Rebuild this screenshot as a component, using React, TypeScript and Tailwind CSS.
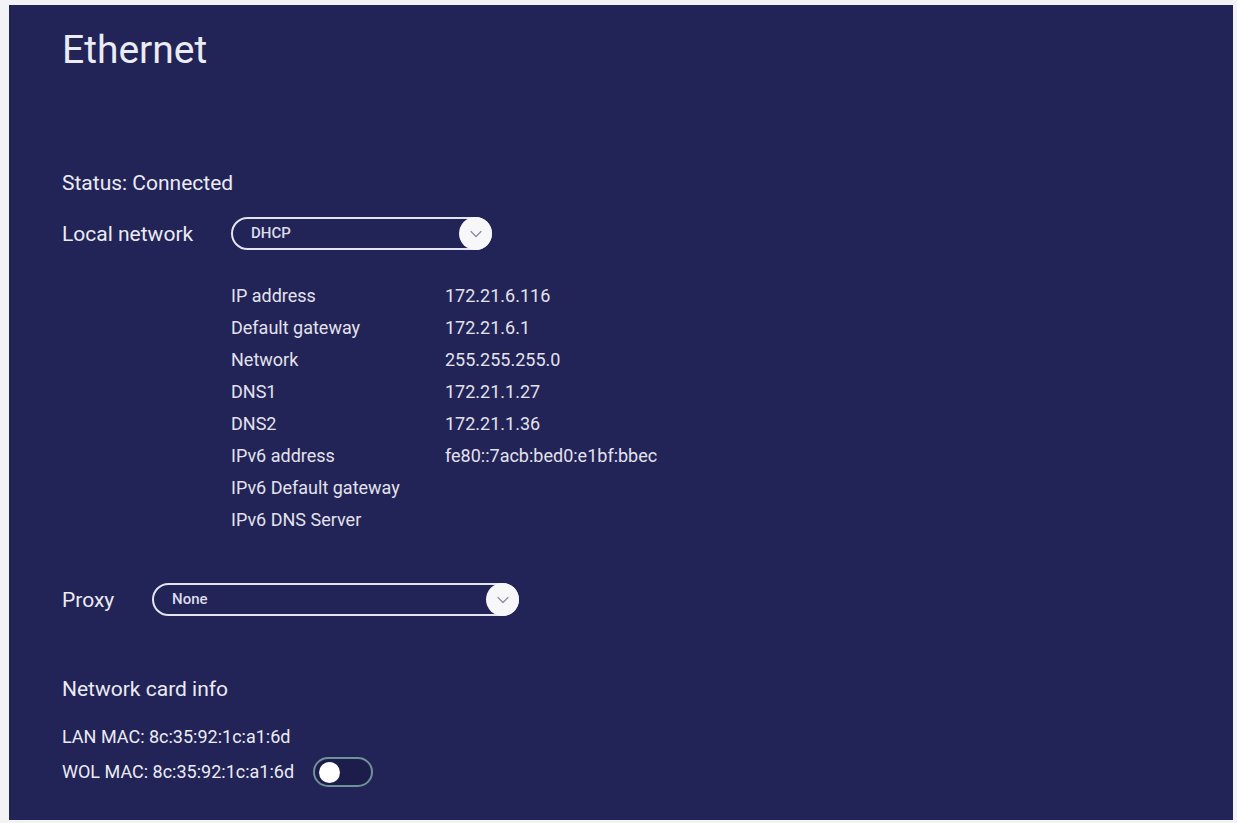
import { ChevronDown } from "lucide-react";

const info = [
  { label: "IP address", value: "172.21.6.116" },
  { label: "Default gateway", value: "172.21.6.1" },
  { label: "Network", value: "255.255.255.0" },
  { label: "DNS1", value: "172.21.1.27" },
  { label: "DNS2", value: "172.21.1.36" },
  { label: "IPv6 address", value: "fe80::7acb:bed0:e1bf:bbec" },
  { label: "IPv6 Default gateway", value: "" },
  { label: "IPv6 DNS Server", value: "" },
];

function Select({ value, width }: { value: string; width: string }) {
  return (
    <div className={`flex h-[33px] items-center rounded-full border-2 border-[#e4e4ee] ${width}`}>
      <span className="flex-1 pl-[18px] text-[15px] font-medium text-[#dcdcea]">{value}</span>
      <div className="-mr-[2px] grid h-[33px] w-[33px] place-items-center rounded-full bg-[#f7f7fa]">
        <ChevronDown className="h-[20px] w-[20px] text-[#8c8ca4]" strokeWidth={1.5} />
      </div>
    </div>
  );
}

export default function App() {
  return (
    <div className="h-[823px] w-[1237px] bg-[#f3f3f5] pb-[3px] pl-[9px] pr-[4px] pt-[5px] font-['Roboto','Liberation_Sans',sans-serif]">
      <div className="h-full bg-[#222357] pl-[53px] pt-[22px] text-[#ebebf3]">
        <h1 className="text-[39px] leading-[46px]">Ethernet</h1>

        <div className="mt-[98px] text-[21px] leading-[24px]">Status: Connected</div>

        <div className="mt-[22px] flex h-[33px] items-center">
          <div className="w-[169px] text-[21px] leading-[24px]">Local network</div>
          <Select value="DHCP" width="w-[261px]" />
        </div>

        <div className="ml-[169px] mt-[29px] flex flex-col">
          {info.map((r) => (
            <div key={r.label} className="flex h-[32px] items-center text-[18px] text-[#e2e2ec]">
              <span className="w-[214px]">{r.label}</span>
              <span>{r.value}</span>
            </div>
          ))}
        </div>

        <div className="mt-[48px] flex h-[33px] items-center">
          <div className="w-[90px] text-[21px] leading-[24px]">Proxy</div>
          <Select value="None" width="w-[367px]" />
        </div>

        <div className="mt-[61px] text-[21px] leading-[24px]">Network card info</div>

        <div className="mt-[25px] text-[18px] leading-[22px]">LAN MAC: 8c:35:92:1c:a1:6d</div>

        <div className="mt-[9px] flex h-[30px] items-center">
          <span className="text-[18px] leading-[22px]">WOL MAC: 8c:35:92:1c:a1:6d</span>
          <div className="ml-[19px] flex h-[30px] w-[60px] items-center rounded-full border-2 border-[#6f9198] bg-[#1c1d4a] pl-[4px]">
            <div className="h-[21px] w-[21px] rounded-full bg-white" />
          </div>
        </div>
      </div>
    </div>
  );
}
